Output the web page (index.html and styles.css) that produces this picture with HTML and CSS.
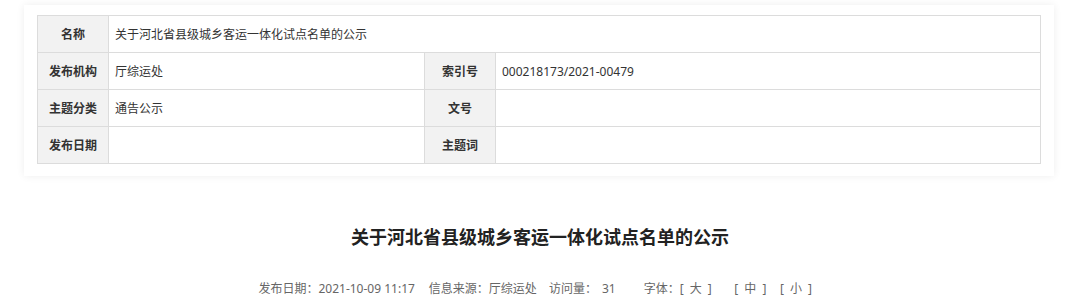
FILE: index.html
```html
<!DOCTYPE html>
<html lang="zh-CN">
<head>
<meta charset="UTF-8">
<meta name="viewport" content="width=device-width, initial-scale=1.0">
<title>关于河北省县级城乡客运一体化试点名单的公示</title>
<link rel="stylesheet" href="styles.css">
</head>
<body>

<div class="info-box">
    <table class="info-table">
        <tr>
            <th>名称</th>
            <td colspan="3">关于河北省县级城乡客运一体化试点名单的公示</td>
        </tr>
        <tr>
            <th>发布机构</th>
            <td class="col-a">厅综运处</td>
            <th>索引号</th>
            <td>000218173/2021-00479</td>
        </tr>
        <tr>
            <th>主题分类</th>
            <td class="col-a">通告公示</td>
            <th>文号</th>
            <td></td>
        </tr>
        <tr>
            <th>发布日期</th>
            <td class="col-a"></td>
            <th>主题词</th>
            <td></td>
        </tr>
    </table>
</div>

<div class="article-head">
    <h1>关于河北省县级城乡客运一体化试点名单的公示</h1>
    <div class="meta">
        <span class="date">发布日期：2021-10-09 11:17</span>
        <span class="source">信息来源：厅综运处</span>
        <span class="views">访问量：<em>31</em></span>
        <span class="font-size">字体：<a href="#" class="big">[ 大 ]</a><a href="#" class="mid">[ 中 ]</a><a href="#" class="small">[ 小 ]</a></span>
    </div>
</div>

</body>
</html>
```

FILE: styles.css
```css
body {
    margin: 0;
    padding: 0;
    background-color: #fff;
    font-family: "Noto Sans", "Noto Sans CJK SC", sans-serif;
    color: #333;
}

.info-box {
    width: 1004px;
    margin: 5px 0 0 24px;
    padding: 10px 13px 12px 13px;
    background-color: #fff;
    box-shadow: 0px 0px 8px 0px rgba(0, 0, 0, 0.07);
}

.info-table {
    width: 100%;
    border-collapse: collapse;
    font-size: 12px;
}

.info-table th,
.info-table td {
    height: 37px;
    padding: 0 6px;
    border: 1px solid #dcdcdc;
    box-sizing: border-box;
}

.info-table th {
    width: 71px;
    padding: 0;
    background-color: #f2f2f2;
    font-weight: bold;
    color: #333;
    text-align: center;
}

.info-table td {
    text-align: left;
    color: #333;
}

.info-table .col-a {
    width: 316px;
}

.article-head {
    text-align: center;
}

.article-head h1 {
    margin: 49px 0 0 0;
    font-size: 18px;
    line-height: 24px;
    font-weight: bold;
    color: #222;
}

.meta {
    display: flex;
    justify-content: center;
    margin-top: 30px;
    padding-right: 8px;
    font-size: 12px;
    line-height: 20px;
    color: #666;
}

.meta .source {
    margin-left: 14px;
}

.meta .views {
    margin-left: 12px;
}

.meta em {
    margin-left: 5px;
    font-style: normal;
}

.meta .font-size {
    margin-left: 28px;
}

.meta a {
    letter-spacing: 1.5px;
    color: #666;
    text-decoration: none;
}

.meta a.big {
    margin-right: 21px;
}

.meta a.mid {
    margin-right: 12px;
}
```
